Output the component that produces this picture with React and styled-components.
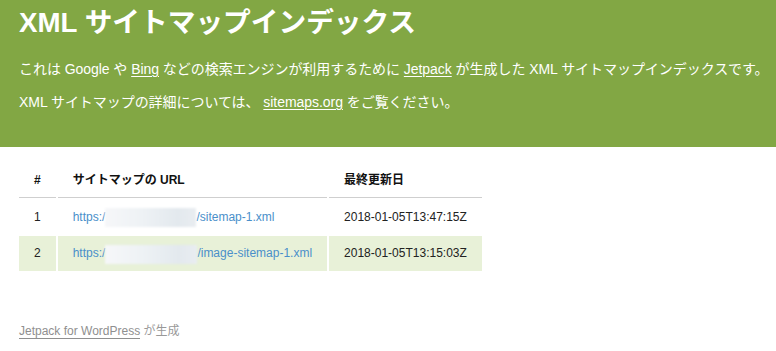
import React from "react";
import styled, { createGlobalStyle } from "styled-components";

const Global = createGlobalStyle`
  html, body { margin: 0; padding: 0; background: #fff; }
  body {
    font-family: "Liberation Sans", Arial, "Noto Sans CJK JP", sans-serif;
    font-size: 14px;
    color: #222;
  }
`;

const Description = styled.header`
  background: #82a744;
  color: #fff;
  padding: 8px 19px 21px;
`;

const Title = styled.h1`
  margin: 0 0 22px;
  font-size: 27.7px;
  line-height: 30px;
  font-weight: bold;
  white-space: nowrap;
`;

const Para = styled.p`
  margin: 0 0 14px;
  font-size: 14px;
  line-height: 19px;
  white-space: nowrap;
  letter-spacing: -0.05px;
`;

const HeadLink = styled.a`
  color: inherit;
  text-decoration: underline;
  text-underline-offset: 2px;
  text-decoration-thickness: 1px;
`;

const Content = styled.main`
  padding: 14px 17px 0;
`;

const Table = styled.table`
  border-spacing: 2px;
  border-collapse: separate;
`;

const Th = styled.th`
  text-align: left;
  font-size: 12px;
  line-height: 14px;
  font-weight: bold;
  color: #111;
  padding: 10px 15px;
  border-bottom: 1px solid #cfcfcf;
  white-space: nowrap;
`;

const Row = styled.tr`
  background: ${(p) => (p.$odd ? "#e8f1d8" : "transparent")};
`;

const Td = styled.td`
  font-size: 12px;
  line-height: 14px;
  color: #222;
  padding: 10px 15px;
  white-space: nowrap;
`;

const UrlLink = styled.a`
  color: #4a8fca;
  text-decoration: none;
`;

const Blur = styled.span`
  display: inline-block;
  width: ${(p) => p.$w}px;
  height: 19px;
  vertical-align: middle;
  margin: -3px 0;
  background: linear-gradient(90deg, #f6f7f9 0%, #eef2f5 40%, #e3e9ee 80%, #e9edf1 100%);
  filter: blur(0.8px);
`;

const Footer = styled.footer`
  margin: 51px 19px 0;
  font-size: 12px;
  line-height: 14px;
  color: #999;
`;

const FootLink = styled.a`
  color: #8f8f8f;
  text-decoration: none;
  display: inline-block;
  line-height: 13px;
  border-bottom: 1px solid #8f8f8f;
`;

const rows = [
  { n: 1, path: "/sitemap-1.xml", date: "2018-01-05T13:47:15Z", w: 91 },
  { n: 2, path: "/image-sitemap-1.xml", date: "2018-01-05T13:15:03Z", w: 92 },
];

export default function App() {
  return (
    <>
      <Global />
      <Description>
        <Title>XML サイトマップインデックス</Title>
        <Para>
          これは Google や <HeadLink href="#">Bing</HeadLink> などの検索エンジンが利用するために{" "}
          <HeadLink href="#">Jetpack</HeadLink> が生成した XML サイトマップインデックスです。
        </Para>
        <Para>
          XML サイトマップの詳細については、 <HeadLink href="#">sitemaps.org</HeadLink> をご覧ください。
        </Para>
      </Description>
      <Content>
        <Table>
          <thead>
            <tr>
              <Th>#</Th>
              <Th>サイトマップの URL</Th>
              <Th>最終更新日</Th>
            </tr>
          </thead>
          <tbody>
            {rows.map((r) => (
              <Row key={r.n} $odd={r.n % 2 === 0}>
                <Td>{r.n}</Td>
                <Td>
                  <UrlLink href="#">
                    https:/<Blur $w={r.w} />{r.path}
                  </UrlLink>
                </Td>
                <Td>{r.date}</Td>
              </Row>
            ))}
          </tbody>
        </Table>
      </Content>
      <Footer>
        <FootLink href="#">Jetpack for WordPress</FootLink> が生成
      </Footer>
    </>
  );
}
